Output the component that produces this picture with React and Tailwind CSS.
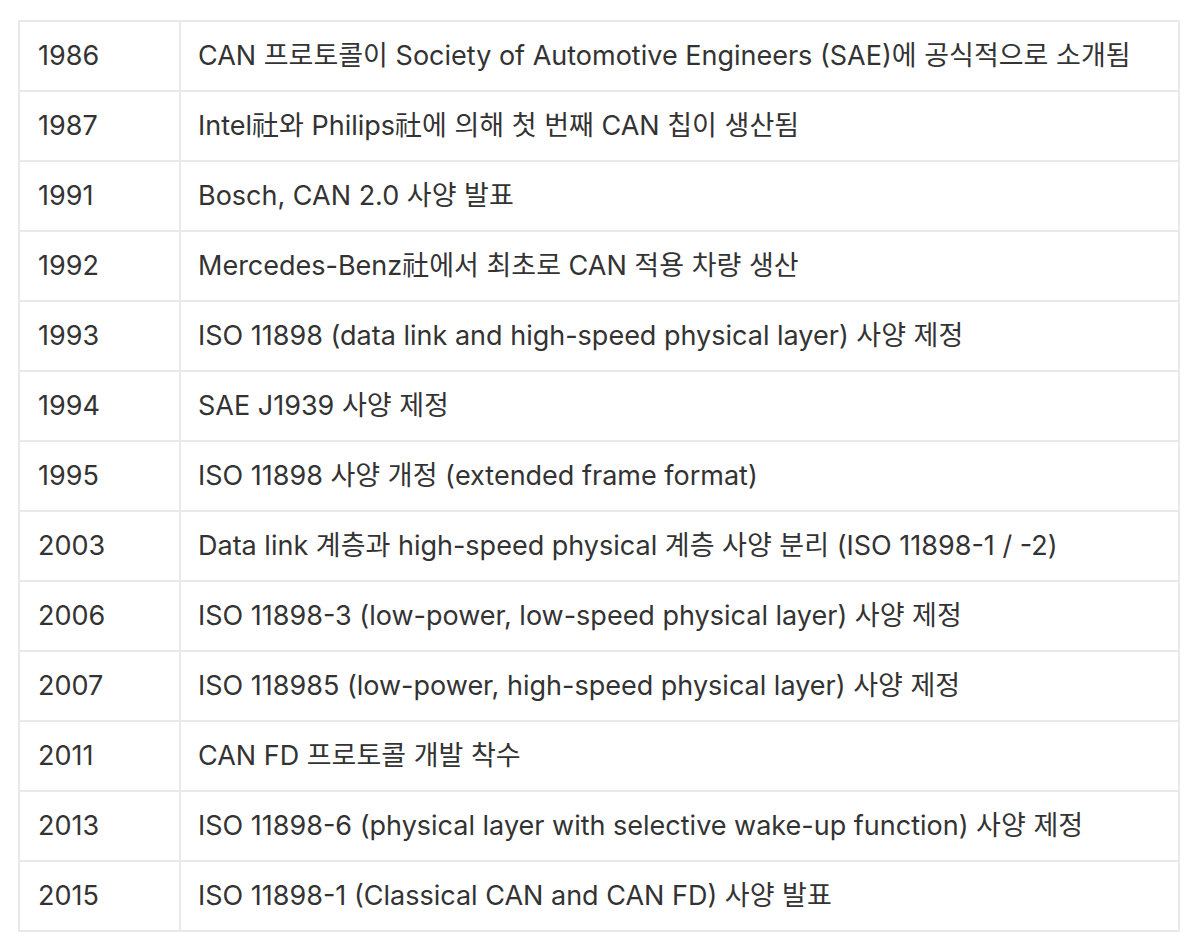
import React from 'react';

const rows = [
  ['1986', 'CAN 프로토콜이 Society of Automotive Engineers (SAE)에 공식적으로 소개됨'],
  ['1987', 'Intel社와 Philips社에 의해 첫 번째 CAN 칩이 생산됨'],
  ['1991', 'Bosch, CAN 2.0 사양 발표'],
  ['1992', 'Mercedes-Benz社에서 최초로 CAN 적용 차량 생산'],
  ['1993', 'ISO 11898 (data link and high-speed physical layer) 사양 제정'],
  ['1994', 'SAE J1939 사양 제정'],
  ['1995', 'ISO 11898 사양 개정 (extended frame format)'],
  ['2003', 'Data link 계층과 high-speed physical 계층 사양 분리 (ISO 11898-1 / -2)'],
  ['2006', 'ISO 11898-3 (low-power, low-speed physical layer) 사양 제정'],
  ['2007', 'ISO 118985 (low-power, high-speed physical layer) 사양 제정'],
  ['2011', 'CAN FD 프로토콜 개발 착수'],
  ['2013', 'ISO 11898-6 (physical layer with selective wake-up function) 사양 제정'],
  ['2015', 'ISO 11898-1 (Classical CAN and CAN FD) 사양 발표'],
];

export default function App() {
  return (
    <div
      className="min-h-screen bg-white pt-[20px] pl-[18px] text-[#333333]"
      style={{ fontFamily: 'Inter, "Noto Sans CJK KR", sans-serif' }}
    >
      <table className="w-[1162px] border-collapse text-[27px]">
        <tbody>
          {rows.map(([year, text]) => (
            <tr key={year} className="h-[70px]">
              <td className="w-[161px] border-2 border-[#e9e9e9] px-[18px] align-middle">{year}</td>
              <td className="border-2 border-[#e9e9e9] px-[17px] align-middle">{text}</td>
            </tr>
          ))}
        </tbody>
      </table>
    </div>
  );
}
